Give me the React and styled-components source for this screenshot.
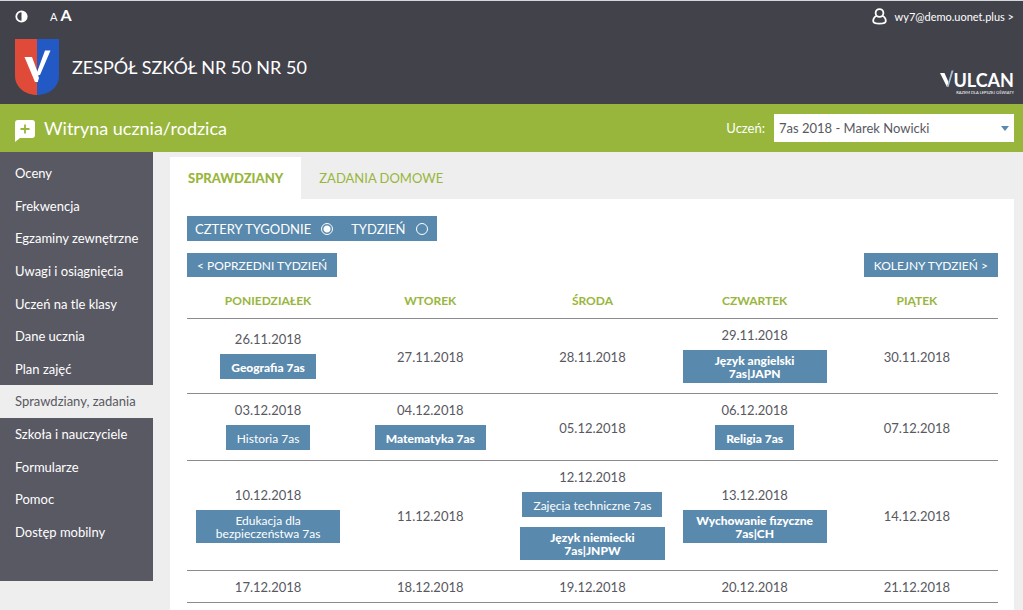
import React, {useState} from "react";
import styled, {createGlobalStyle, css} from "styled-components";

const green = "#98b63c";
const blue = "#5989ad";
const dark = "#42424b";
const slate = "#595963";
const light = "#eeeeee";

const GlobalStyle = createGlobalStyle`
    * {
        box-sizing: border-box;
    }

    body {
        margin: 0;
        background: ${light};
        color: #58585f;
        font-family: Lato, "Liberation Sans", sans-serif;
        font-size: 13px;
    }
`;

const Page = styled.div`
    display: flex;
    flex-direction: column;
    min-height: 100vh;
`;

const Header = styled.header`
    background: ${dark};
    border-top: 1px solid #d5d9dc;
    color: white;
    padding: 6px 9px 9px 15px;
`;

const HeaderRow = styled.div`
    display: flex;
    align-items: center;
    justify-content: space-between;
`;

const BrandRow = styled(HeaderRow)`
    align-items: flex-end;
    padding-top: 14px;
`;

const Tools = styled.div`
    display: flex;
    align-items: center;
    gap: 22px;
    height: 18px;
`;

const PlainButton = styled.button`
    display: flex;
    align-items: baseline;
    gap: 3px;
    border: 0;
    padding: 0;
    background: none;
    color: inherit;
    font: inherit;
    cursor: pointer;
`;

const Letter = styled.span`
    font-size: ${props => props.$big ? 16 : 11}px;
    font-weight: ${props => props.$big ? 700 : 400};
    line-height: 18px;
`;

const UserLink = styled.a`
    display: flex;
    align-items: center;
    gap: 8px;
    color: white;
    font-size: 11px;
    text-decoration: none;
`;

const Brand = styled.div`
    display: flex;
    align-items: center;
    gap: 13px;
`;

const SchoolName = styled.h1`
    margin: 0;
    font-size: 18px;
    font-weight: 400;
    line-height: 24px;
`;

const TitleBar = styled.div`
    display: flex;
    align-items: center;
    justify-content: space-between;
    height: 48px;
    padding: 0 9px 0 15px;
    background: ${green};
    color: white;
`;

const Title = styled.h2`
    display: flex;
    align-items: center;
    gap: 9px;
    margin: 0;
    font-size: 18px;
    font-weight: 400;

    svg {
        margin-top: 5px;
    }
`;

const StudentLabel = styled.label`
    display: flex;
    align-items: center;
    gap: 9px;
`;

const SelectBox = styled.span`
    display: grid;
    align-items: center;
    width: 240px;

    > * {
        grid-area: 1 / 1;
    }

    svg {
        justify-self: end;
        margin-right: 5px;
        pointer-events: none;
    }
`;

const Select = styled.select`
    appearance: none;
    height: 28px;
    border: 0;
    border-radius: 0;
    padding: 0 20px 0 5px;
    background: white;
    color: #58585f;
    font: inherit;
`;

const Columns = styled.div`
    display: flex;
    flex: 1;
    align-items: flex-start;
`;

const Sidebar = styled.nav`
    flex: 0 0 153px;
    padding: 5px 0 32px;
    background: ${slate};
`;

const MenuLink = styled.a`
    display: block;
    padding: 8px 0 8px 15px;
    color: white;
    line-height: 1.28;
    white-space: nowrap;
    text-decoration: none;

    ${props => props.$active && css`
        background: ${light};
        color: #58585f;
    `};
`;

const Main = styled.main`
    display: flex;
    flex: 1;
    flex-direction: column;
    align-self: stretch;
    padding: 5px 9px 0 17px;
`;

const Tabs = styled.div`
    display: flex;
`;

const Tab = styled.button`
    height: 42px;
    border: 0;
    padding: 0 18px;
    background: none;
    color: ${green};
    font: inherit;
    cursor: pointer;

    ${props => props.$active && css`
        background: white;
        font-weight: 900;
    `};
`;

const Panel = styled.section`
    flex: 1;
    padding: 17px 16px 7px 17px;
    background: white;
`;

const RangePicker = styled.div`
    display: inline-flex;
    gap: 18px;
    height: 25px;
    padding: 0 9px 0 8px;
    background: ${blue};
    color: white;
`;

const RadioLabel = styled.label`
    display: flex;
    align-items: center;
    gap: 10px;
`;

const Radio = styled.input`
    appearance: none;
    width: 12px;
    height: 12px;
    margin: 0;
    border: 1px solid white;
    border-radius: 50%;

    &:checked {
        background: radial-gradient(circle, white 3px, transparent 4px);
    }
`;

const WeekNav = styled.div`
    display: flex;
    justify-content: space-between;
    padding: 12px 0;
`;

const WeekButton = styled.button`
    height: 24px;
    border: 0;
    padding: 0 10px;
    background: ${blue};
    color: white;
    font: inherit;
    font-size: 12px;
    cursor: pointer;
`;

const Calendar = styled.table`
    width: 100%;
    border-collapse: collapse;
    table-layout: fixed;
    text-align: center;
`;

const DayName = styled.th`
    border-bottom: 1px solid #8a8a8f;
    padding: 4px 0 9px;
    color: ${green};
    font-size: 12px;
    line-height: 16px;
`;

const DayCell = styled.td`
    border-bottom: 1px solid #8a8a8f;
    padding: 8px 9px 7px;
    vertical-align: middle;
`;

const DayDate = styled.div`
    line-height: 16px;
`;

const Exam = styled.button`
    display: flex;
    align-items: center;
    justify-content: center;
    width: fit-content;
    min-height: 25px;
    margin: 7px auto 3px;
    border: 0;
    padding: 4px 11px 3px;
    background: ${blue};
    color: white;
    font: inherit;
    font-size: 12px;
    font-weight: ${props => props.$bold ? 900 : 400};
    line-height: 13px;
    cursor: pointer;

    & + & {
        margin-top: 10px;
    }
`;

const ContrastIcon = () => (
    <svg width="13" height="13" viewBox="0 0 13 13">
        <circle cx="6.5" cy="6.5" r="5.2" fill="none" stroke="white" strokeWidth="1.8"/>
        <path d="M6.5 1.5a5 5 0 0 1 0 10z" fill="white"/>
    </svg>
);

const UserIcon = () => (
    <svg width="15" height="17" viewBox="0 0 15 17" fill="none" stroke="white" strokeWidth="1.8">
        <circle cx="7.5" cy="5" r="3.9"/>
        <path d="M4.8 7.8C2.6 8.8 1.2 10.8 1.2 13c0 2 1.5 2.7 6.3 2.7s6.3-.7 6.3-2.7c0-2.2-1.4-4.2-3.6-5.2"/>
    </svg>
);

const ShieldLogo = () => (
    <svg width="44" height="56" viewBox="0 0 44 56">
        <path d="M0 0h22v56C9 56 0 47 0 37z" fill="#e04a38"/>
        <path d="M22 0h22v37c0 10-9 19-22 19z" fill="#2259c4"/>
        <path d="M9.500 18h7.500l6.500 17.500-.5 7.500h-3z" fill="white"/>
        <path d="M30 11.500h5.500L25 36h-4zM19 36h3.500l1.500 3-1.500 4H20z" fill="white"/>
    </svg>
);

const BubbleIcon = () => (
    <svg width="20" height="22" viewBox="0 0 20 22">
        <path d="M3 0h14a3 3 0 0 1 3 3v12a3 3 0 0 1-3 3H5l-5 4V3a3 3 0 0 1 3-3z" fill="white"/>
        <path d="M10 4.5v9M5.5 9h9" stroke={green} strokeWidth="1.8"/>
    </svg>
);

const VulcanLogo = () => (
    <svg width="74" height="30" viewBox="0 0 74 30" fill="white">
        <path d="M0 8h4.500l4 9-1.500 5z"/>
        <path d="M7 22L11.500 5.500h2L8.500 22z" fill="#a9c0d6"/>
        <text x="74" y="22" textAnchor="end" fontSize="18" fontWeight="700">ULCAN</text>
        <text x="74" y="29" textAnchor="end" fontSize="4">RAZEM DLA LEPSZEJ OŚWIATY</text>
    </svg>
);

const menu = [
    "Oceny",
    "Frekwencja",
    "Egzaminy zewnętrzne",
    "Uwagi i osiągnięcia",
    "Uczeń na tle klasy",
    "Dane ucznia",
    "Plan zajęć",
    "Sprawdziany, zadania",
    "Szkoła i nauczyciele",
    "Formularze",
    "Pomoc",
    "Dostęp mobilny",
];

const days = ["PONIEDZIAŁEK", "WTOREK", "ŚRODA", "CZWARTEK", "PIĄTEK"];

const weeks = [
    [
        {date: "26.11.2018", exams: [{name: "Geografia 7as", bold: true}]},
        {date: "27.11.2018"},
        {date: "28.11.2018"},
        {date: "29.11.2018", exams: [{name: "Język angielski 7as|JAPN", bold: true}]},
        {date: "30.11.2018"},
    ],
    [
        {date: "03.12.2018", exams: [{name: "Historia 7as"}]},
        {date: "04.12.2018", exams: [{name: "Matematyka 7as", bold: true}]},
        {date: "05.12.2018"},
        {date: "06.12.2018", exams: [{name: "Religia 7as", bold: true}]},
        {date: "07.12.2018"},
    ],
    [
        {date: "10.12.2018", exams: [{name: "Edukacja dla bezpieczeństwa 7as"}]},
        {date: "11.12.2018"},
        {date: "12.12.2018", exams: [
            {name: "Zajęcia techniczne 7as"},
            {name: "Język niemiecki 7as|JNPW", bold: true},
        ]},
        {date: "13.12.2018", exams: [{name: "Wychowanie fizyczne 7as|CH", bold: true}]},
        {date: "14.12.2018"},
    ],
    [
        {date: "17.12.2018"},
        {date: "18.12.2018"},
        {date: "19.12.2018"},
        {date: "20.12.2018"},
        {date: "21.12.2018"},
    ],
];

const Day = ({date, exams = []}) => (
    <DayCell>
        <DayDate>{date}</DayDate>
        {exams.map(exam => <Exam key={exam.name} $bold={exam.bold}>{exam.name}</Exam>)}
    </DayCell>
);

const App = () => {
    const [range, setRange] = useState("month");
    const [tab, setTab] = useState("SPRAWDZIANY");

    return (
        <Page>
            <GlobalStyle/>
            <Header>
                <HeaderRow>
                    <Tools>
                        <PlainButton aria-label="Kontrast"><ContrastIcon/></PlainButton>
                        <PlainButton aria-label="Rozmiar tekstu">
                            <Letter>A</Letter>
                            <Letter $big>A</Letter>
                        </PlainButton>
                    </Tools>
                    <UserLink href="#konto"><UserIcon/>wy7@demo.uonet.plus &gt;</UserLink>
                </HeaderRow>
                <BrandRow>
                    <Brand>
                        <ShieldLogo/>
                        <SchoolName>ZESPÓŁ SZKÓŁ NR 50 NR 50</SchoolName>
                    </Brand>
                    <VulcanLogo/>
                </BrandRow>
            </Header>
            <TitleBar>
                <Title><BubbleIcon/>Witryna ucznia/rodzica</Title>
                <StudentLabel>
                    Uczeń:
                    <SelectBox>
                        <Select>
                            <option>7as 2018 - Marek Nowicki</option>
                        </Select>
                        <svg width="8" height="5" viewBox="0 0 8 5"><path d="M0 0h8L4 5z" fill={blue}/></svg>
                    </SelectBox>
                </StudentLabel>
            </TitleBar>
            <Columns>
                <Sidebar>
                    {menu.map(item => (
                        <MenuLink key={item} href="#menu" $active={item === "Sprawdziany, zadania"}>
                            {item}
                        </MenuLink>
                    ))}
                </Sidebar>
                <Main>
                    <Tabs>
                        {["SPRAWDZIANY", "ZADANIA DOMOWE"].map(name => (
                            <Tab key={name} $active={tab === name} onClick={() => setTab(name)}>{name}</Tab>
                        ))}
                    </Tabs>
                    <Panel>
                        <RangePicker>
                            <RadioLabel>
                                CZTERY TYGODNIE
                                <Radio
                                    type="radio"
                                    name="range"
                                    checked={range === "month"}
                                    onChange={() => setRange("month")}
                                />
                            </RadioLabel>
                            <RadioLabel>
                                TYDZIEŃ
                                <Radio
                                    type="radio"
                                    name="range"
                                    checked={range === "week"}
                                    onChange={() => setRange("week")}
                                />
                            </RadioLabel>
                        </RangePicker>
                        <WeekNav>
                            <WeekButton>&lt; POPRZEDNI TYDZIEŃ</WeekButton>
                            <WeekButton>KOLEJNY TYDZIEŃ &gt;</WeekButton>
                        </WeekNav>
                        <Calendar>
                            <thead>
                                <tr>{days.map(day => <DayName key={day}>{day}</DayName>)}</tr>
                            </thead>
                            <tbody>
                                {weeks.map(week => (
                                    <tr key={week[0].date}>
                                        {week.map(day => <Day key={day.date} {...day}/>)}
                                    </tr>
                                ))}
                            </tbody>
                        </Calendar>
                    </Panel>
                </Main>
            </Columns>
        </Page>
    );
};

export default App;
